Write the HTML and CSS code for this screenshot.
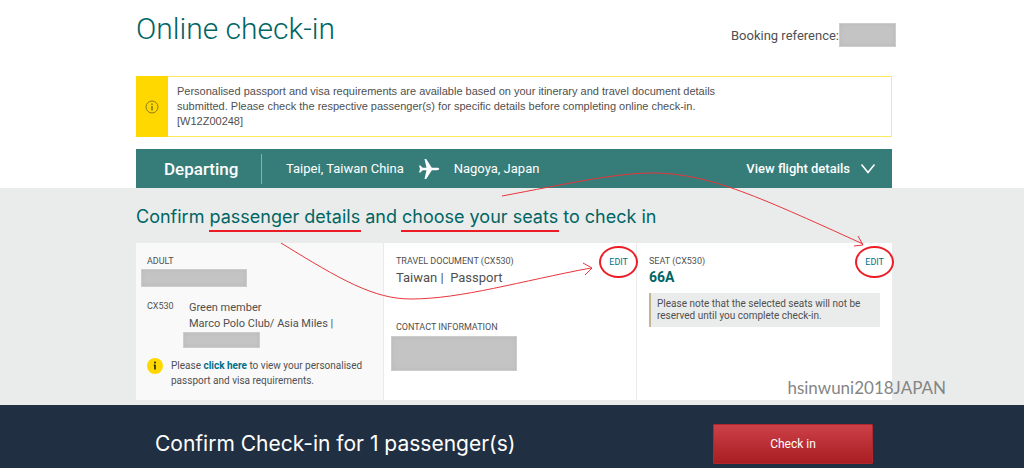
FILE: index.html
```html
<!DOCTYPE html>
<html lang="en">
<head>
    <meta charset="UTF-8">
    <meta name="viewport" content="width=device-width, initial-scale=1.0">
    <title>Online check-in</title>
    <link rel="stylesheet" href="styles.css">
</head>
<body>
    <header class="container page-header">
        <h1>Online check-in</h1>
        <p class="booking">Booking reference:<span class="redacted redacted-booking"></span></p>
    </header>

    <div class="container">
        <div class="notice">
            <div class="notice-icon">
                <svg width="14" height="14" viewBox="0 0 14 14" fill="none" stroke="#8d7c1c">
                    <circle cx="7" cy="7" r="6"/>
                    <path d="M7 6v4.500M7 3.600v1.400" stroke-width="1.600"/>
                </svg>
            </div>
            <p>Personalised passport and visa requirements are available based on your itinerary and travel document details<br>submitted. Please check the respective passenger(s) for specific details before completing online check-in.<br>[W12Z00248]</p>
        </div>

        <div class="flight-bar">
            <h2>Departing</h2>
            <div class="route">
                <span>Taipei, Taiwan China</span>
                <svg width="22" height="22" viewBox="0 0 22 22" fill="#fff">
                    <path d="M1 7.500h1.400L4.700 9.800H8.500L6.500 1h1.700l5.600 8.800h5.100c1.400 0 2.300.5 2.300 1.200s-.9 1.200-2.300 1.200h-5.100L8.200 21H6.500l2-8.800H4.700l-2.300 2.300H1L2 11z"/>
                </svg>
                <span>Nagoya, Japan</span>
            </div>
            <button type="button" class="details-toggle">
                View flight details
                <svg width="16" height="12" viewBox="0 0 16 12" fill="none" stroke="#fff" stroke-width="1.6">
                    <path d="M1.500 1.500 8 9.500l6.500-8"/>
                </svg>
            </button>
        </div>
    </div>

    <main>
        <div class="container details">
            <h2>Confirm <span class="underlined">passenger details</span> and <span class="underlined">choose your seats</span> to check in</h2>

            <div class="cards">
                <section class="card card-passenger">
                    <h3>ADULT</h3>
                    <span class="redacted redacted-name"></span>
                    <div class="membership">
                        <h3>CX530</h3>
                        <div>
                            <p>Green member</p>
                            <p>Marco Polo Club/ Asia Miles |</p>
                            <span class="redacted redacted-number"></span>
                        </div>
                    </div>
                    <div class="visa-info">
                        <svg width="16" height="16" viewBox="0 0 16 16">
                            <circle cx="8" cy="8" r="8" fill="#ffd800"/>
                            <path d="M8 6.800v4.600M6.800 7.300H8" stroke="#222" stroke-width="1.600"/>
                            <circle cx="8" cy="4.600" r="1" fill="#222"/>
                        </svg>
                        <p>Please <a href="#">click here</a> to view your personalised passport and visa requirements.</p>
                    </div>
                </section>

                <section class="card">
                    <div class="card-top">
                        <h3>TRAVEL DOCUMENT (CX530)</h3>
                        <a href="#" class="edit">EDIT</a>
                    </div>
                    <p class="document">Taiwan |&nbsp; Passport</p>
                    <h3>CONTACT INFORMATION</h3>
                    <span class="redacted redacted-contact"></span>
                </section>

                <section class="card card-seat">
                    <div class="card-top">
                        <h3>SEAT (CX530)</h3>
                        <a href="#" class="edit">EDIT</a>
                    </div>
                    <p class="seat">66A</p>
                    <p class="seat-note">Please note that the selected seats will not be reserved until you complete check-in.</p>
                </section>
            </div>

            <svg class="arrows" width="756" height="217" viewBox="0 0 756 217" fill="none" stroke="#e8353c">
                <path d="M145 55C205 92 238 111 275 111C325 111 385 93 455 80M447 75l9 5-7 7"/>
                <path d="M366 8C430-4 480-15 515-15C570-15 615 5 727 56M722 48l5 9-9 1"/>
            </svg>
            <p class="watermark">hsinwuni2018JAPAN</p>
        </div>
    </main>

    <footer>
        <div class="container">
            <div class="confirm">
                <p>Confirm Check-in for 1 passenger(s)</p>
                <button type="button" class="check-in">Check in</button>
            </div>
        </div>
    </footer>
</body>
</html>
```
FILE: styles.css
```css
* {
    box-sizing: border-box;
}

body {
    margin: 0;
    background-color: #fff;
    color: #505050;
    font-family: Roboto, "Liberation Sans", sans-serif;
    font-size: 12px;
    line-height: 15px;
}

h1, h2, h3, p {
    margin: 0;
    font-weight: 400;
}

a {
    color: #00708a;
    text-decoration: none;
}

button {
    border: none;
    color: #fff;
    font-family: inherit;
    cursor: pointer;
}

svg {
    flex: none;
}

.container {
    position: relative;
    max-width: 760px;
    margin: 0 auto;
    padding-left: 4px;
}

.page-header {
    display: flex;
    justify-content: space-between;
    height: 76px;
    padding-top: 11px;
}

h1 {
    color: #006564;
    font-size: 30px;
    font-weight: 300;
    line-height: 36px;
}

.booking {
    display: flex;
    align-items: center;
    height: 24px;
    margin: 12px -4px 0 0;
    font-size: 13px;
}

.redacted {
    display: block;
    background-color: #c4c4c4;
    border: 1px solid #cdcdcd;
    box-shadow: inset 0 0 4px #b8b8b8;
}

.redacted-booking {
    width: 57px;
    height: 24px;
}

.notice {
    display: flex;
    border: 1px solid #ffe95c;
    background-color: #fff;
}

.notice-icon {
    display: flex;
    align-items: center;
    justify-content: center;
    width: 32px;
    margin: -1px 0 -1px -1px;
    background-color: #ffd800;
}

.notice p {
    padding: 7px 9px;
    font-family: "Liberation Sans", sans-serif;
    font-size: 11px;
}

.flight-bar {
    display: flex;
    align-items: center;
    height: 39px;
    margin-top: 12px;
    padding-right: 16px;
    background-color: #367d79;
    color: #fff;
}

.flight-bar h2 {
    width: 126px;
    padding-left: 28px;
    border-right: 1px solid #86b1af;
    font-size: 17px;
    font-weight: 500;
    line-height: 30px;
}

.route {
    display: flex;
    align-items: center;
    gap: 14px;
    padding-left: 24px;
    font-size: 13px;
}

.details-toggle {
    display: flex;
    align-items: center;
    gap: 10px;
    margin-left: auto;
    padding: 0;
    background: none;
    font-size: 13px;
    font-weight: 500;
}

main {
    padding-bottom: 5px;
    background-color: #eaeceb;
}

.details h2 {
    padding: 17px 0 14px;
    color: #006564;
    font-family: Inter, sans-serif;
    font-size: 18px;
    line-height: 24px;
}

.underlined {
    position: relative;
}

.underlined::after {
    content: "";
    position: absolute;
    right: -1px;
    bottom: -5px;
    left: -1px;
    height: 2px;
    background-color: #ed1c24;
}

.cards {
    display: grid;
    grid-template-columns: 248fr 253fr 255fr;
    min-height: 157px;
    background-color: #fff;
}

.card {
    padding: 12px;
    border-right: 1px solid #eaeceb;
}

.card-seat {
    border-right: none;
}

.card-passenger {
    padding-left: 11px;
    background-color: #f9f9f9;
}

h3 {
    font-size: 9px;
    line-height: 13px;
}

.redacted-name {
    width: 106px;
    height: 18px;
    margin: 1px 0 0 -6px;
}

.membership {
    display: grid;
    grid-template-columns: 42px 1fr;
    margin-top: 13px;
}

.membership p {
    font-size: 11px;
    line-height: 16px;
}

.redacted-number {
    width: 77px;
    height: 16px;
    margin-left: -6px;
}

.visa-info {
    display: flex;
    gap: 8px;
    margin-top: 10px;
    font-size: 10px;
}

.visa-info a {
    font-weight: 700;
}

.card-top {
    display: flex;
    justify-content: space-between;
}

.edit {
    position: relative;
    margin-right: -4px;
    font-size: 9px;
    line-height: 14px;
}

.edit::after {
    content: "";
    position: absolute;
    top: -9px;
    right: -10px;
    bottom: -9px;
    left: -10px;
    border: 2px solid #ed1c24;
    border-radius: 50%;
}

.document {
    margin: 1px 0 35px;
    font-size: 13px;
    line-height: 16px;
}

.redacted-contact {
    width: 126px;
    height: 35px;
    margin: 2px 0 0 -5px;
}

.seat {
    margin-bottom: 8px;
    color: #006564;
    font-size: 14px;
    font-weight: 700;
    line-height: 16px;
}

.seat-note {
    padding: 5px 6px;
    border-left: 2px solid #c3b691;
    background-color: #eaeceb;
    font-size: 10px;
    line-height: 12px;
}

/* hand drawn marks lie over the cards */
.arrows {
    position: absolute;
    top: 0;
    left: 4px;
    overflow: visible;
    pointer-events: none;
}

.watermark {
    position: absolute;
    right: -54px;
    bottom: 2px;
    color: #858585;
    font-family: Lato, sans-serif;
    font-size: 17px;
    line-height: 20px;
}

footer {
    background-color: #212f42;
    color: #fff;
}

.confirm {
    display: flex;
    align-items: center;
    justify-content: space-between;
    padding: 19px 19px 4px;
}

.confirm p {
    font-family: Inter, sans-serif;
    font-size: 21px;
    line-height: 28px;
}

.check-in {
    width: 160px;
    height: 40px;
    border: 1px solid #b3262b;
    border-radius: 1px;
    background: linear-gradient(#cc4047, #a81e22);
    font-size: 12px;
}
```
